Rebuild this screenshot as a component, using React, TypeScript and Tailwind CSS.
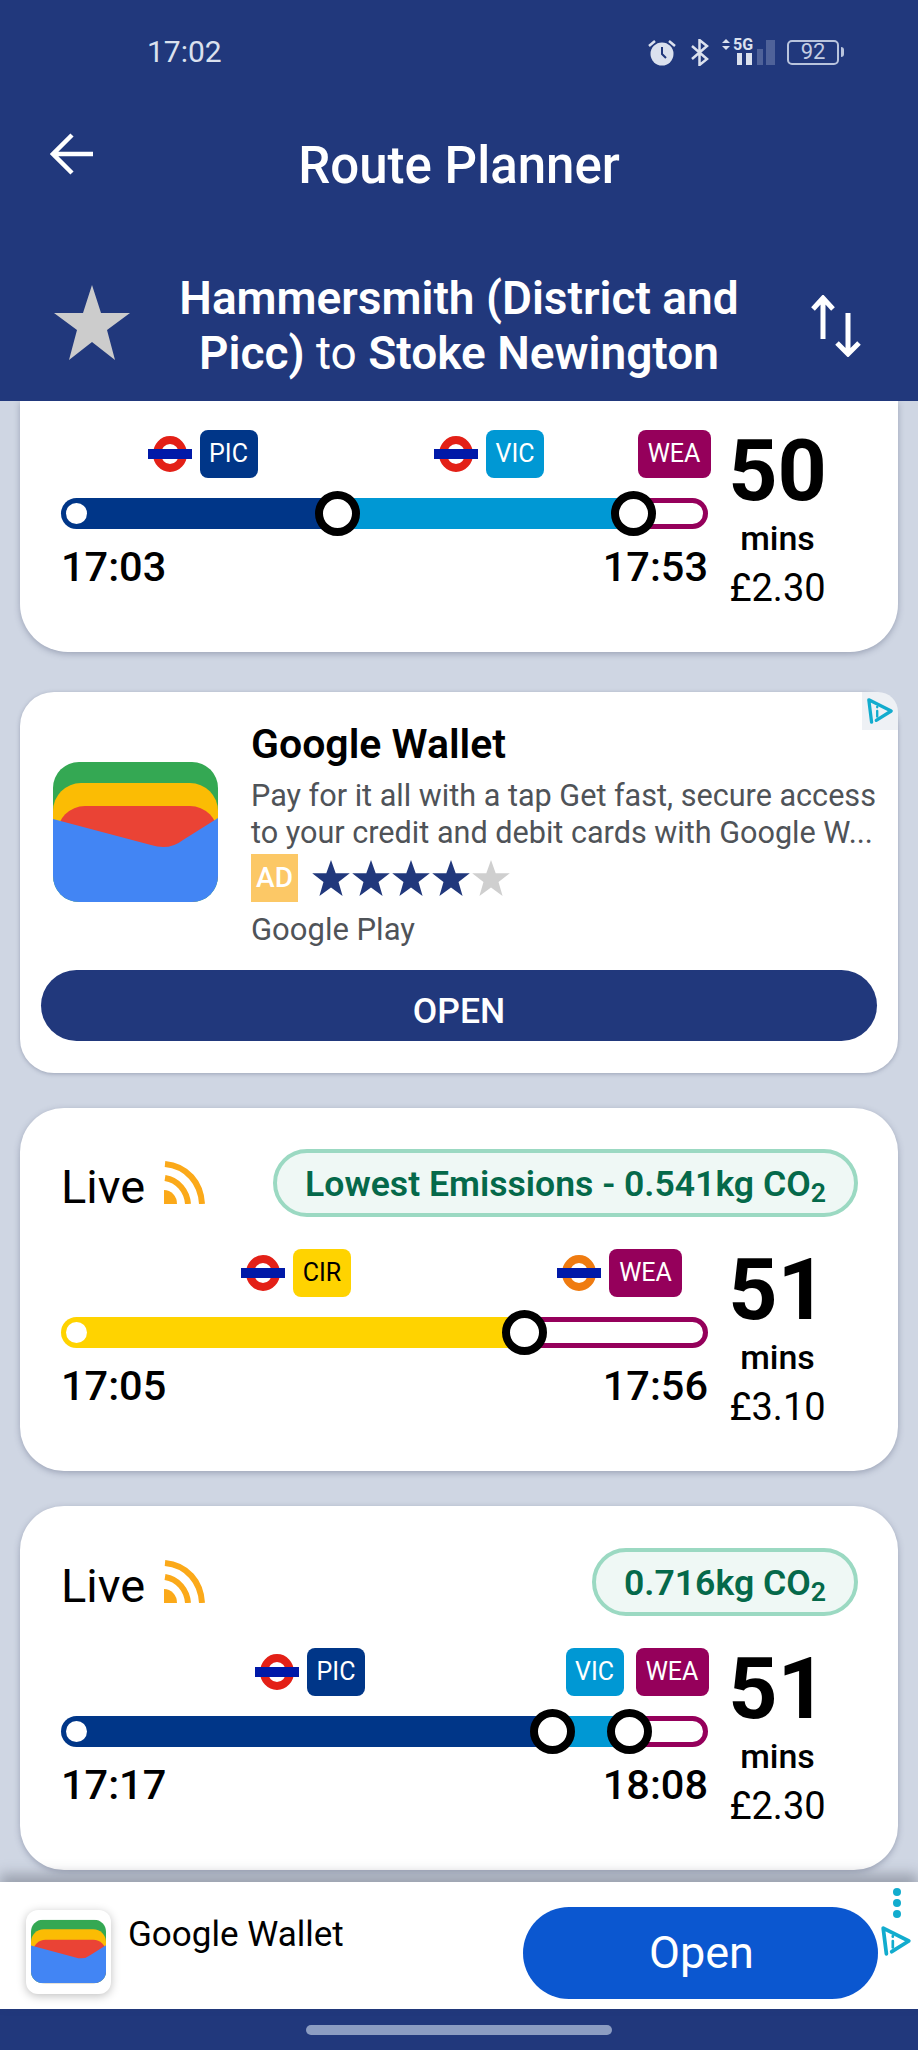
import React from "react";

const NAVY = "#21387c";

function Roundel({ color = "#e32017" }: { color?: string }) {
  return (
    <svg width="44" height="36" viewBox="0 0 44 36" className="shrink-0 self-center">
      <ellipse cx="22" cy="18" rx="13" ry="14" fill="none" stroke={color} strokeWidth="8" />
      <rect x="0" y="13" width="44" height="10" fill="#0019a8" />
    </svg>
  );
}

function Badge({ label }: { label: "PIC" | "VIC" | "WEA" | "CIR" }) {
  const cls = {
    PIC: "w-[58px] bg-[#003688] text-white",
    VIC: "w-[58px] bg-[#0098d4] text-white",
    WEA: "w-[73px] bg-[#95005b] text-white",
    CIR: "w-[58px] bg-[#ffd300] text-black",
  }[label];
  return (
    <div className={`flex h-[48px] shrink-0 items-center justify-center rounded-[8px] text-[25px] ${cls}`}>{label}</div>
  );
}

function Stop() {
  return <div className="absolute top-[-7px] right-[-22px] z-10 h-[45px] w-[45px] rounded-full border-[8px] border-black bg-white" />;
}

type Seg = {
  line: "PIC" | "VIC" | "WEA" | "CIR";
  width: string;
  bar: string;
  tube?: string;
};

function Journey({ segs, from, to, mins, price }: { segs: Seg[]; from: string; to: string; mins: string; price: string }) {
  return (
    <div className="ml-[41px] flex">
      <div className="w-[647px]">
        <div className="flex">
          {segs.map((s) => (
            <div key={s.line} className={`flex justify-center gap-[8px] pl-[6px] ${s.width}`}>
              {s.tube && <Roundel color={s.tube} />}
              <Badge label={s.line} />
            </div>
          ))}
        </div>
        <div className="relative mt-[20px] flex h-[31px]">
          {segs.map((s, i) => {
            const last = i === segs.length - 1;
            return (
              <div key={s.line} className={`relative ${s.width}`}>
                <div className={`h-full ${s.bar} ${i === 0 ? "rounded-l-full" : ""} ${last ? "rounded-r-full" : ""}`} />
                {!last && <Stop />}
              </div>
            );
          })}
          <div className="absolute top-[5px] left-[5px] h-[21px] w-[21px] rounded-full bg-white" />
        </div>
        <div className="mt-[18px] flex justify-between text-[41.5px] leading-[40px] font-medium text-black">
          <span>{from}</span>
          <span>{to}</span>
        </div>
      </div>
      <div className="flex w-[139px] flex-col items-center pt-[1px] text-black">
        <div className="text-[86px] leading-[80px] font-bold">{mins}</div>
        <div className="mt-[9px] text-[34px] leading-[36px] font-medium">mins</div>
        <div className="mt-[10px] text-[38px] leading-[44px]">{price}</div>
      </div>
    </div>
  );
}

function Rss() {
  return (
    <svg width="42" height="43" viewBox="0 0 42 43" fill="none" stroke="#fba919" strokeWidth="6" className="mt-[-2px]">
      <path d="M2 3C24 5 38 22 39 43" />
      <path d="M2 17C15 19 24 30 25 43" />
      <path d="M1 29A13 14 0 0 1 14 43H1Z" fill="#fba919" stroke="none" />
    </svg>
  );
}

function LiveHeader({ children }: { children: React.ReactNode }) {
  return (
    <div className="mr-[40px] ml-[41px] flex items-center justify-between">
      <div className="flex items-center gap-[18px]">
        <span className="pt-[8px] text-[47px] leading-[50px] text-black">Live</span>
        <Rss />
      </div>
      <div className="flex h-[68px] items-center rounded-full border-[4px] border-[#9bd9c2] bg-[#eff8f5] px-[28px] text-[35.6px] font-semibold text-[#05694a]">
        <span className="pt-[3px]">{children}</span>
      </div>
    </div>
  );
}

function Wallet({ className }: { className: string }) {
  return (
    <svg viewBox="0 0 165 140" className={className}>
      <defs>
        <clipPath id="wallet-clip">
          <rect width="165" height="140" rx="26" />
        </clipPath>
      </defs>
      <g clipPath="url(#wallet-clip)">
        <rect width="165" height="140" fill="#34a853" />
        <rect y="21" width="165" height="119" rx="28" fill="#fbbc04" />
        <rect x="4" y="44" width="161" height="96" rx="28" fill="#ea4335" />
        <path d="M0 57L98 83Q116 89 130 78L165 56V140H0Z" fill="#4285f4" />
      </g>
    </svg>
  );
}

function AdChoice({ className }: { className: string }) {
  return (
    <svg viewBox="0 0 30 30" fill="none" stroke="#12acce" strokeWidth="3.5" strokeLinejoin="round" strokeLinecap="round" className={className}>
      <path d="M6 27L3 3L27 15L11 25" />
      <path d="M12 15V21" strokeWidth="2.5" />
      <path d="M12 10.5V11" strokeWidth="2.5" />
    </svg>
  );
}

function Star({ fill }: { fill: string }) {
  return (
    <svg width="38" height="36" viewBox="0 0 24 23">
      <path d="M12 0L15 8.5H24L16.8 14L19.4 23L12 17.6L4.6 23L7.2 14L0 8.5H9Z" fill={fill} />
    </svg>
  );
}

function StatusIcons() {
  const c = "#dbe1ee";
  return (
    <div className="flex items-center">
      <svg width="28" height="27" viewBox="0 0 28 27">
        <circle cx="14" cy="15" r="11.5" fill={c} />
        <path d="M14 8V15L18 19" stroke={NAVY} strokeWidth="2" fill="none" />
        <path d="M1 7L7 2M27 7L21 2" stroke={c} strokeWidth="2.5" />
      </svg>
      <svg width="18" height="27" viewBox="0 0 18 27" fill="none" stroke={c} strokeWidth="2.5" className="ml-[15px]">
        <path d="M1 7L16 20L8.5 26V1L16 7L1 20" />
      </svg>
      <div className="relative ml-[13px] h-[28px] w-[53px]">
        <svg width="53" height="28" viewBox="0 0 53 28" className="absolute inset-0">
          <path d="M0 5L4 1L8 5ZM0 8L4 12L8 8Z" fill={c} />
          <rect x="15" y="15" width="5" height="12" fill={c} />
          <rect x="24" y="15" width="6" height="12" fill={c} />
          <rect x="35" y="11" width="6" height="16" fill={c} opacity="0.25" />
          <rect x="44" y="2" width="9" height="25" fill={c} opacity="0.25" />
        </svg>
        <span className="absolute top-[-2px] left-[11px] text-[16px] leading-[18px] font-bold text-[#dbe1ee]">5G</span>
      </div>
      <div className="ml-[12px] flex h-[25px] w-[52px] items-center justify-center rounded-[5px] border-[2px] border-[#b9c4dd] text-[22px] leading-none text-[#c4cde2]">
        92
      </div>
      <div className="ml-[2px] h-[10px] w-[3px] rounded-r-sm bg-[#b9c4dd]" />
    </div>
  );
}

export default function App() {
  return (
    <div className="flex h-[2050px] w-[918px] flex-col overflow-hidden bg-[#cfd6e3] font-['Roboto',sans-serif]">
      <header className="h-[401px] shrink-0 bg-[#21387c] text-white">
        <div className="flex h-[44px] translate-y-[30px] items-center justify-between pr-[74px] pl-[147px]">
          <span className="text-[30px] leading-none text-[#dbe1ee]">17:02</span>
          <StatusIcons />
        </div>
        <div className="mt-[92px] grid grid-cols-[1fr_auto_1fr] items-center">
          <svg width="43" height="42" viewBox="0 0 43 42" fill="none" stroke="white" strokeWidth="4.5" className="mt-[-24px] ml-[50px]">
            <path d="M43 21H3M22 2L3 21L22 40" />
          </svg>
          <h1 className="text-[51px] leading-[60px] font-medium">Route Planner</h1>
          <div />
        </div>
        <div className="mt-[75px] grid grid-cols-[1fr_600px_1fr] items-center">
          <svg width="76" height="75" viewBox="0 0 76 75" className="mt-[-8px] ml-[54px]">
            <path d="M38 0L47 28H76L53 45L61 75L38 57L15 75L23 45L0 28H29Z" fill="#cccccc" />
          </svg>
          <div className="text-center text-[46px] leading-[55px]">
            <span className="font-semibold">Hammersmith (District and Picc)</span> to{" "}
            <span className="font-semibold">Stoke Newington</span>
          </div>
          <svg width="50" height="62" viewBox="0 0 50 62" fill="none" stroke="white" strokeWidth="5" className="mr-[57px] justify-self-end">
            <path d="M12 44V3M2 14L12 3L22 14" />
            <path d="M37 18V59M26 48L37 59L48 48" />
          </svg>
        </div>
      </header>

      <main className="flex-1 overflow-hidden px-[20px]">
        <section className="h-[251px] rounded-b-[48px] bg-white pt-[29px] shadow-[0_2px_6px_rgba(60,70,100,0.35)]">
          <Journey
            segs={[
              { line: "PIC", width: "w-[277px]", bar: "bg-[#003688]", tube: "#e32017" },
              { line: "VIC", width: "w-[296px]", bar: "bg-[#0098d4]", tube: "#e32017" },
              { line: "WEA", width: "w-[74px]", bar: "border-[5px] border-[#95005b] bg-white" },
            ]}
            from="17:03"
            to="17:53"
            mins="50"
            price="£2.30"
          />
        </section>

        <section className="relative mt-[40px] h-[381px] rounded-[34px] bg-white pt-[30px] shadow-[0_1px_4px_rgba(60,70,100,0.35)]">
          <div className="absolute top-0 right-0 flex h-[38px] w-[36px] items-center justify-center rounded-tr-[20px] bg-[#eef1f5]">
            <AdChoice className="h-[28px] w-[28px]" />
          </div>
          <div className="flex pr-[18px] pl-[33px]">
            <Wallet className="mt-[40px] h-[140px] w-[165px] shrink-0" />
            <div className="ml-[33px] min-w-0 flex-1">
              <div className="text-[41px] leading-[44px] font-semibold text-black">Google Wallet</div>
              <div className="mt-[12px] text-[30.6px] leading-[36.5px] text-[#4f5358]">
                <div className="whitespace-nowrap">Pay for it all with a tap Get fast, secure access</div>
                <div className="whitespace-nowrap">to your credit and debit cards with Google W...</div>
              </div>
              <div className="mt-[3px] flex items-center">
                <div className="flex h-[48px] w-[47px] items-center justify-center bg-[#fcc866] text-[28px] font-medium text-white">AD</div>
                <div className="ml-[14px] flex gap-[2px]">
                  <Star fill={NAVY} />
                  <Star fill={NAVY} />
                  <Star fill={NAVY} />
                  <Star fill={NAVY} />
                  <Star fill="#cfcfcf" />
                </div>
              </div>
              <div className="mt-[10px] text-[31px] leading-[36px] text-[#4f5358]">Google Play</div>
            </div>
          </div>
          <div className="mx-[21px] mt-[22px] flex h-[71px] items-center justify-center rounded-full bg-[#21387c] pt-[12px] text-[35.5px] font-medium text-white">
            OPEN
          </div>
        </section>

        <section className="mt-[35px] h-[363px] rounded-[44px] bg-white pt-[41px] shadow-[0_2px_6px_rgba(60,70,100,0.35)]">
          <LiveHeader>
            Lowest Emissions - 0.541kg CO<sub>2</sub>
          </LiveHeader>
          <div className="mt-[32px]">
            <Journey
              segs={[
                { line: "CIR", width: "w-[464px]", bar: "bg-[#ffd300]", tube: "#e32017" },
                { line: "WEA", width: "w-[183px]", bar: "border-[5px] border-[#95005b] bg-white", tube: "#ef7b10" },
              ]}
              from="17:05"
              to="17:56"
              mins="51"
              price="£3.10"
            />
          </div>
        </section>

        <section className="mt-[35px] h-[364px] rounded-[44px] bg-white pt-[42px] shadow-[0_2px_6px_rgba(60,70,100,0.35)]">
          <LiveHeader>
            0.716kg CO<sub>2</sub>
          </LiveHeader>
          <div className="mt-[32px]">
            <Journey
              segs={[
                { line: "PIC", width: "w-[492px]", bar: "bg-[#003688]", tube: "#e32017" },
                { line: "VIC", width: "w-[77px]", bar: "bg-[#0098d4]" },
                { line: "WEA", width: "w-[78px]", bar: "border-[5px] border-[#95005b] bg-white" },
              ]}
              from="17:17"
              to="18:08"
              mins="51"
              price="£2.30"
            />
          </div>
        </section>
      </main>

      <aside className="relative z-10 flex h-[127px] shrink-0 items-center bg-white shadow-[0_-8px_12px_rgba(60,65,80,0.35)]">
        <div className="mt-[12px] ml-[26px] flex h-[84px] w-[85px] items-center justify-center rounded-[12px] bg-white shadow-[0_2px_10px_rgba(0,0,0,0.25)]">
          <Wallet className="h-[65px] w-[75px]" />
        </div>
        <div className="mt-[-22px] ml-[17px] text-[35px] leading-[38px] text-black">Google Wallet</div>
        <div className="absolute top-[25px] left-[523px] flex h-[92px] w-[355px] items-center justify-center rounded-full bg-[#0b57d0] pl-[2px] text-[45px] text-white">
          Open
        </div>
        <div className="absolute top-[6px] right-[17px] flex flex-col gap-[3px]">
          <div className="h-[8px] w-[8px] rounded-full bg-[#12acce]" />
          <div className="h-[8px] w-[8px] rounded-full bg-[#12acce]" />
          <div className="h-[8px] w-[8px] rounded-full bg-[#12acce]" />
        </div>
        <AdChoice className="absolute top-[43px] right-[6px] h-[32px] w-[32px]" />
      </aside>

      <footer className="flex h-[41px] shrink-0 items-center justify-center bg-[#21387c]">
        <div className="h-[10px] w-[306px] rounded-full bg-[#8c9dc2]" />
      </footer>
    </div>
  );
}
